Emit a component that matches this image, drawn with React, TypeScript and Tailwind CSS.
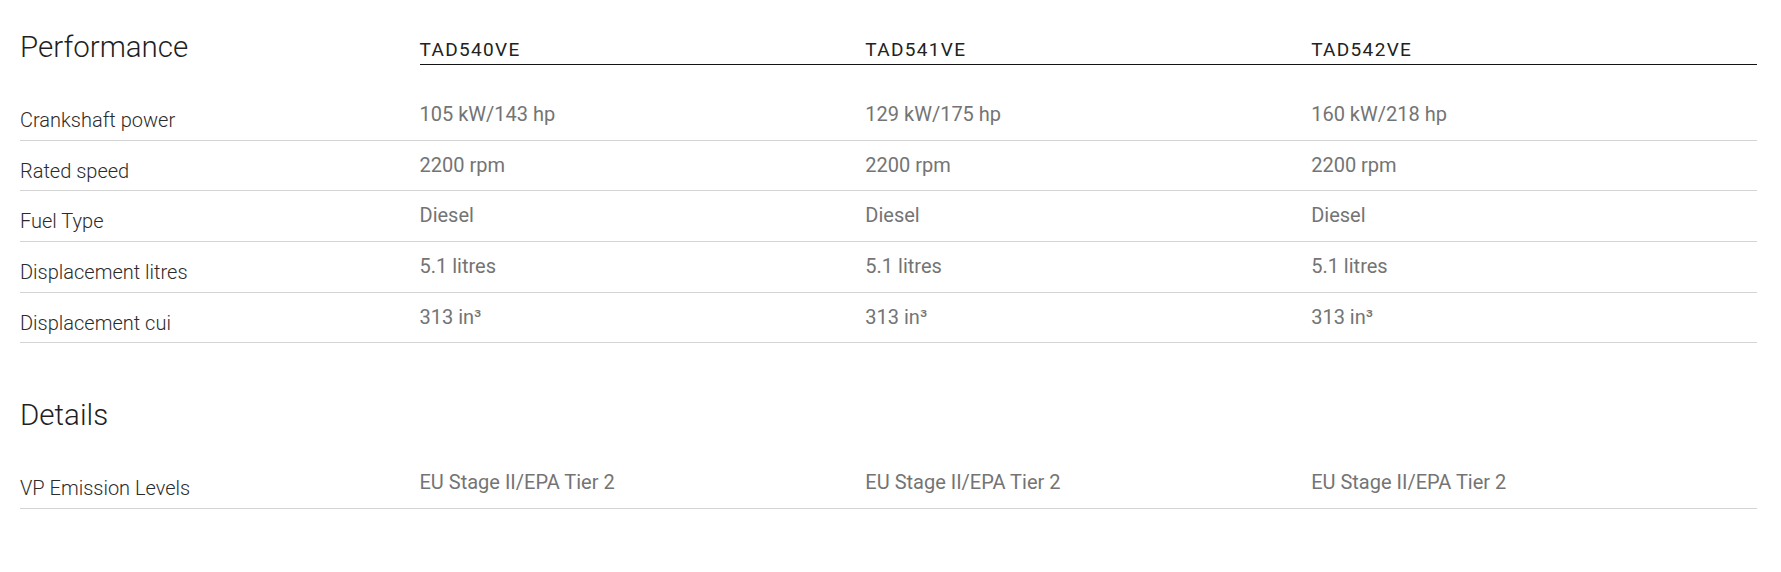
import React from 'react';

type Row = { label: string; values: string[] };

const models = ['TAD540VE', 'TAD541VE', 'TAD542VE'];

const performance: Row[] = [
  { label: 'Crankshaft power', values: ['105 kW/143 hp', '129 kW/175 hp', '160 kW/218 hp'] },
  { label: 'Rated speed', values: ['2200 rpm', '2200 rpm', '2200 rpm'] },
  { label: 'Fuel Type', values: ['Diesel', 'Diesel', 'Diesel'] },
  { label: 'Displacement litres', values: ['5.1 litres', '5.1 litres', '5.1 litres'] },
  { label: 'Displacement cui', values: ['313 in³', '313 in³', '313 in³'] },
];

const details: Row[] = [
  { label: 'VP Emission Levels', values: ['EU Stage II/EPA Tier 2', 'EU Stage II/EPA Tier 2', 'EU Stage II/EPA Tier 2'] },
];

const SpecSection: React.FC<{ title: string; rows: Row[]; showModels?: boolean }> = ({ title, rows, showModels }) => (
  <section className="mt-[25px] first:mt-0">
    {/* Header */}
    <div className="grid grid-cols-[23%_1fr_1fr_1fr] h-[65px]">
      <div className="flex items-end pb-[3px]">
        <h2 className="text-[29.5px] leading-[29px] font-light text-[#1f1f1f]">{title}</h2>
      </div>
      {showModels &&
        models.map(model => (
          <div key={model} className="flex items-end pb-[5px] border-b border-[#141414]">
            <span className="text-[19px] leading-[19px] tracking-[0.07em] text-[#222222]">{model}</span>
          </div>
        ))}
    </div>

    {/* Rows */}
    <div className="mt-[25px]">
      {rows.map(row => (
        <div
          key={row.label}
          className="grid grid-cols-[23%_1fr_1fr_1fr] h-[50.67px] border-b border-[#d4d4d4]"
        >
          <div className="pt-[20px] text-[20px] leading-[20px] font-light text-[#2b2b2b]">{row.label}</div>
          {row.values.map((value, i) => (
            <div key={i} className="pt-[14px] text-[20px] leading-[20px] text-[#747474]">
              {value}
            </div>
          ))}
        </div>
      ))}
    </div>
  </section>
);

export default function App() {
  return (
    <div className="bg-white w-[1781px] h-[572px] font-['Roboto',sans-serif]">
      <div className="ml-[20px] w-[1737px]">
        <SpecSection title="Performance" rows={performance} showModels />
        <SpecSection title="Details" rows={details} />
      </div>
    </div>
  );
}
